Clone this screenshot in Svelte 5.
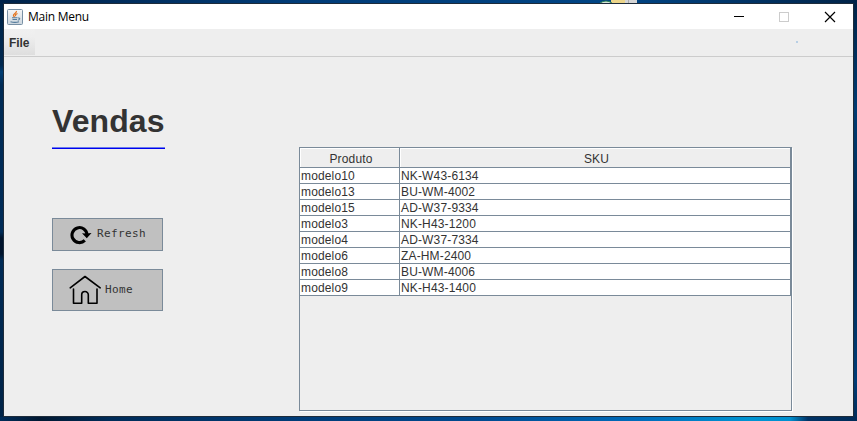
<script>
  const rows = [
    ['modelo10', 'NK-W43-6134'],
    ['modelo13', 'BU-WM-4002'],
    ['modelo15', 'AD-W37-9334'],
    ['modelo3', 'NK-H43-1200'],
    ['modelo4', 'AD-W37-7334'],
    ['modelo6', 'ZA-HM-2400'],
    ['modelo8', 'BU-WM-4006'],
    ['modelo9', 'NK-H43-1400'],
  ];
</script>

<div class="desktop">
  <svg class="desktop-icon" width="37" height="3" viewBox="0 0 37 3">
    <path d="M15 0h22v3H15z" fill="#d5d5d5" /><path d="M28 0h1v3h-1z" fill="#aaa" />
    <path d="M11 0h14v3H11z" fill="#ecd58a" />
    <path d="M0 3Q6-1 12 3" fill="#d5e5da" stroke="#2b8057" />
  </svg>
  <div class="window">
    <header class="titlebar">
      <svg class="java" width="16" height="16" viewBox="0 0 16 16">
        <defs>
          <linearGradient id="tile" x1="0" y1="0" x2="0" y2="1">
            <stop offset="0" stop-color="#f4f5f6" /><stop offset="1" stop-color="#ccd6de" />
          </linearGradient>
        </defs>
        <rect x=".5" y=".5" width="15" height="15" rx="1" fill="url(#tile)" stroke="#7890a5" />
        <path d="M9.4 2C10 4 6.4 4.700 6.500 6.300c0 1 .9 1.400 1.100 2M10.500 4.500C8.600 5.200 8 6 8.800 7" fill="none" stroke="#e4731c" stroke-width="1.300" />
        <path d="M5 8.800h5.500M5.500 10.500h4.500M3.500 12.700q4.500 1.400 8.500 0M11 9q2.300-.3 1.500 1.200-.6.900-1.700 1" fill="none" stroke="#547b9b" stroke-width="1.100" />
      </svg>
      <span class="caption">Main Menu</span>
      <svg class="controls" width="104" height="12" viewBox="0 0 104 12" shape-rendering="crispEdges">
        <path d="M1 5.500h10" stroke="#000" />
        <rect x="46.500" y="1.500" width="9" height="9" fill="none" stroke="#ccc" />
        <path d="M92 1l10 10M102 1L92 11" stroke="#000" stroke-width="1.200" shape-rendering="auto" />
      </svg>
    </header>
    <nav class="menubar"><span class="menu">File</span><i class="speck"></i></nav>
    <main>
      <aside>
        <h1>Vendas</h1>
        <button class="refresh">
          <svg width="22" height="20" viewBox="0 0 22 20">
            <path d="M14.800 15.400A7.500 7.500 0 1 1 17 9.800" fill="none" stroke="#000" stroke-width="3.100" />
            <path d="M12 8.300l4 .2 5.500-.4L16.800 13.200z" />
          </svg>
          <span>Refresh</span>
        </button>
        <button class="home">
          <svg width="33" height="30" viewBox="0 0 33 30">
            <path d="M1.200 12.800L16 1.500 31.200 12.800M4.500 14V28.300h8.200v-8.500a3.300 3.300 0 0 1 6.600 0v8.500h8.700V14" fill="none" stroke="#000" stroke-width="1.600" stroke-linecap="round" stroke-linejoin="round" />
          </svg>
          <span>Home</span>
        </button>
      </aside>
      <section class="pane">
        <div class="row head"><span>Produto</span><span>SKU</span></div>
        {#each rows as [produto, sku]}
          <div class="row"><span>{produto}</span><span>{sku}</span></div>
        {/each}
      </section>
    </main>
  </div>
</div>

<style>
  :global(body) { overflow: hidden; }
  .desktop {
    box-sizing: border-box;
    position: relative;
    width: 857px;
    height: 421px;
    padding: 4px;
    background:
      linear-gradient(90deg, #002c59 0, #001832 40px, #002c59 110px, #003c78 300px, #004a90 480px, #006cbb 640px, #0094d2 750px, #0090d0 790px, #003366 808px, #002b58 857px) 0 417px / 857px 4px no-repeat,
      linear-gradient(90deg, #00234a 0, #003c78 300px, #004585 620px, #00376c 720px, #002348 857px) 0 0 / 857px 4px no-repeat,
      linear-gradient(180deg, #002549 0, #00284f 65px, #003d73 72px, #002b56 85px, #002c58 232px, #00142d 238px, #00142d 254px, #002b56 260px, #002347 421px) 0 0 / 4px 421px no-repeat,
      linear-gradient(180deg, #002347 0, #003b72 110px, #00284f 230px, #003c76 380px, #002c58 421px);
  }
  .desktop-icon { position: absolute; left: 600px; top: 0; }
  .window {
    width: 849px;
    height: 412px;
    background: #eee;
    box-shadow: 0 0 0 1px #1d2b3a;
    display: flex;
    flex-direction: column;
  }
  .titlebar {
    height: 25px;
    background: #fff;
    display: flex;
    align-items: center;
    flex: none;
  }
  .java { margin-left: 3px; }
  .caption {
    margin-left: 5px;
    font: 12px/20px "Open Sans", sans-serif;
    letter-spacing: -0.25px;
    color: #000;
  }
  .controls { margin: 0 16px 0 auto; }
  .menubar {
    box-sizing: border-box;
    height: 28px;
    flex: none;
    display: flex;
    border-bottom: 1px solid #ccc;
  }
  .menu {
    width: 31px;
    height: 26px;
    box-sizing: border-box;
    padding-left: 5px;
    font: bold 12px/28px "Liberation Sans", Arial, sans-serif;
    letter-spacing: -0.1px;
    color: #333;
    background: linear-gradient(#f0f0f0, #eee 30%, #dedede);
  }
  .speck { width: 2px; height: 2px; margin: 12px 55px 0 auto; background: #b8cfe5; }
  main { display: flex; flex: 1; }
  aside { width: 113px; margin-left: 48px; }
  h1 {
    box-sizing: border-box;
    height: 49px;
    margin: 43px 0 69px;
    font: bold 32px/42px "Liberation Sans", Arial, sans-serif;
    letter-spacing: 0.1px;
    color: #333;
    border-bottom: 1px solid #0000f0;
    box-shadow: inset 0 -1px #6a7cec;
  }
  button {
    box-sizing: border-box;
    display: flex;
    align-items: center;
    width: 111px;
    padding: 0;
    border: 1px solid #7a8a99;
    border-radius: 0;
    background: #c0c0c0;
    color: #333;
    font: 11px/14px "DejaVu Sans Mono", monospace;
    letter-spacing: 0.38px;
  }
  .refresh { height: 33px; margin-bottom: 18px; }
  .refresh svg { margin: 0 5px 0 17px; }
  .refresh span { margin-bottom: 2px; }
  .home { height: 42px; }
  .home svg { margin: 0 3px 0 16px; }
  .pane {
    box-sizing: border-box;
    width: 493px;
    height: 264px;
    margin: 90px 0 0 134px;
    border: 1px solid #7a8a99;
    box-shadow: 1px 1px #fff;
  }
  .row {
    box-sizing: border-box;
    display: flex;
    height: 16px;
    width: 491px;
    background: #fff;
    border-bottom: 1px solid #7a8a99;
    border-right: 1px solid #7a8a99;
    font: 12px/16px "Liberation Sans", Arial, sans-serif;
    letter-spacing: 0.15px;
    color: #333;
  }
  .row span { box-sizing: border-box; padding-left: 1px; flex: 1; height: 15px; white-space: nowrap; }
  .row span:first-child { flex: none; width: 100px; border-right: 1px solid #7a8a99; }
  .head { height: 20px; line-height: 22px; background: #eee; }
  .head span { height: 19px; padding: 0 0 0 3px; text-align: center; box-shadow: inset 1px 1px #fff; }
</style>
